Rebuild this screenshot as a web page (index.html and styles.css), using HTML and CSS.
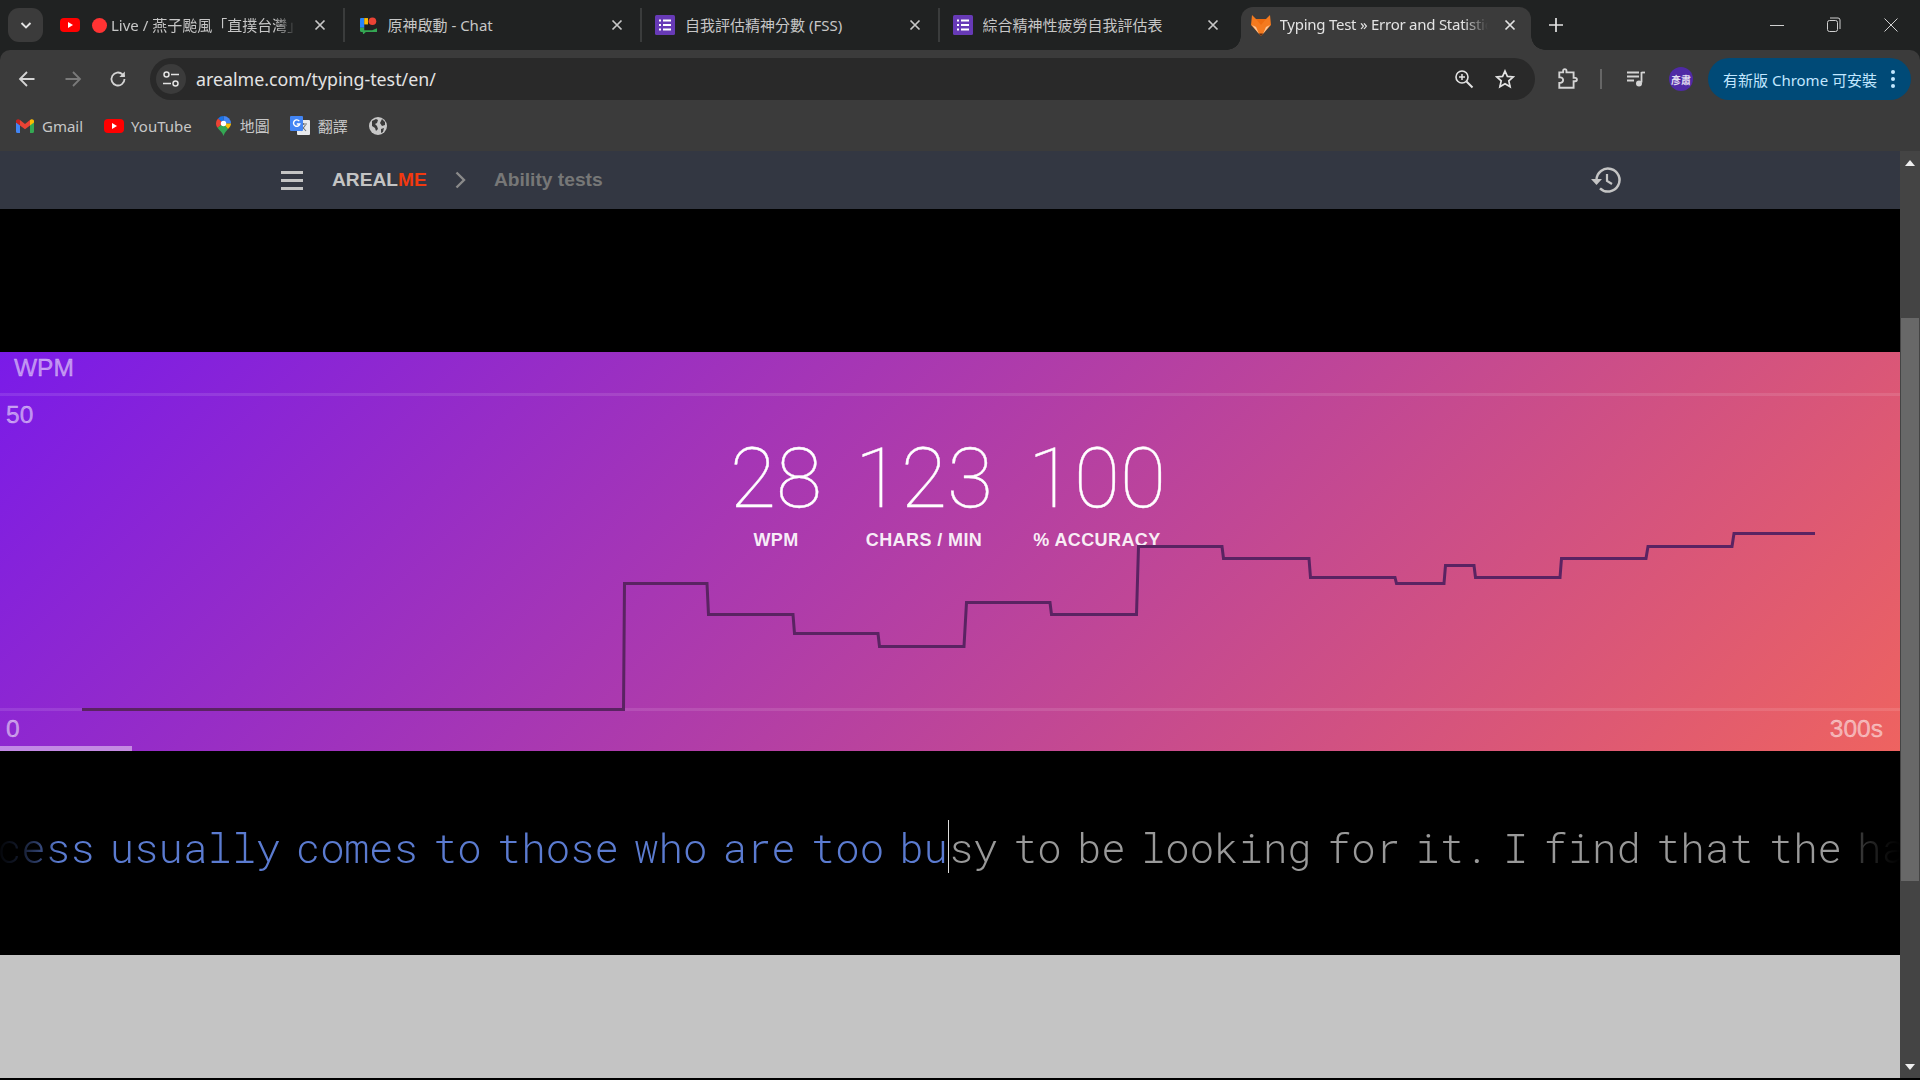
FILE: index.html
```html
<!DOCTYPE html>
<html lang="en">
<head>
<meta charset="utf-8">
<title>Typing Test</title>
<link rel="stylesheet" href="styles.css">
</head>
<body>
<header class="chrome">
  <div class="tabstrip">
    <button class="tab-menu"><svg width="14" height="14" viewBox="0 0 14 14"><path d="M2.5 5l4.5 4.5L11.500 5" fill="none" stroke="#e3e3e3" stroke-width="1.900"/></svg></button>
    <div class="tab">
      <svg class="fav" width="20" height="20" viewBox="0 0 20 20"><rect y="3" width="20" height="14" rx="4" fill="#f00"/><path d="M8 7l5 3-5 3z" fill="#fff"/></svg>
      <span class="live-dot"></span>
      <span class="tab-title tab-title-live">Live / 燕子颱風「直撲台灣」</span>
      <svg class="x" width="12" height="12" viewBox="0 0 12 12"><path d="M1.500 1.500l9 9M10.500 1.500l-9 9" stroke="#c7c7c7" stroke-width="1.700"/></svg>
    </div>
    <div class="tab">
      <svg class="fav fav-chat" width="17" height="17" viewBox="0 0 16 16"><path d="M0 2a1 1 0 0 1 1-1h3v9H0z" fill="#2684fc"/><path d="M4 1h3.500v6H4z" fill="#fbbc04"/><circle cx="11.700" cy="4" r="3.600" fill="#ea4335"/><path d="M0 10h4v2.500h7.500L16 10.500v3.500H5.500L3 16.500 2.500 14H1a1 1 0 0 1-1-1z" fill="#34a853"/></svg>
      <span class="tab-title">原神啟動 - Chat</span>
      <svg class="x" width="12" height="12" viewBox="0 0 12 12"><path d="M1.500 1.500l9 9M10.500 1.500l-9 9" stroke="#c7c7c7" stroke-width="1.700"/></svg>
    </div>
    <div class="tab">
      <svg class="fav" width="20" height="20" viewBox="0 0 20 20"><rect width="20" height="20" rx="1.500" fill="#673ab7"/><path d="M8 5.500h8M8 10h8M8 14.500h8M4 5.500h2M4 10h2M4 14.500h2" stroke="#fff" stroke-width="2"/></svg>
      <span class="tab-title">自我評估精神分數 (FSS)</span>
      <svg class="x" width="12" height="12" viewBox="0 0 12 12"><path d="M1.500 1.500l9 9M10.500 1.500l-9 9" stroke="#c7c7c7" stroke-width="1.700"/></svg>
    </div>
    <div class="tab tab-last">
      <svg class="fav" width="20" height="20" viewBox="0 0 20 20"><rect width="20" height="20" rx="1.500" fill="#673ab7"/><path d="M8 5.500h8M8 10h8M8 14.500h8M4 5.500h2M4 10h2M4 14.500h2" stroke="#fff" stroke-width="2"/></svg>
      <span class="tab-title">綜合精神性疲勞自我評估表</span>
      <svg class="x" width="12" height="12" viewBox="0 0 12 12"><path d="M1.500 1.500l9 9M10.500 1.500l-9 9" stroke="#c7c7c7" stroke-width="1.700"/></svg>
    </div>
    <div class="tab tab-active">
      <svg class="fav" width="20" height="21" viewBox="0 0 20 21"><path d="M1 0l4 4h10l4-4 1 10-10 11L0 10z" fill="#f47a1f"/><path d="M1 10l4 2 3 7z" fill="#fbc79a"/><path d="M19 10l-4 2-3 7z" fill="#fbc79a"/><path d="M8 18.500h4L10 21z" fill="#5b2c14"/><path d="M5 4h10l-5 6z" fill="#ee6c10"/></svg>
      <span class="tab-title tab-title-fade">Typing Test » Error and Statistics</span>
      <svg class="x" width="12" height="12" viewBox="0 0 12 12"><path d="M1.500 1.500l9 9M10.500 1.500l-9 9" stroke="#e3e3e3" stroke-width="1.700"/></svg>
    </div>
    <svg class="plus" width="14" height="14" viewBox="0 0 14 14"><path d="M7 0v14M0 7h14" stroke="#e3e3e3" stroke-width="1.700"/></svg>
    <div class="win-controls">
      <svg width="14" height="14" viewBox="0 0 14 14"><path d="M0 7.500h14" stroke="#d0d0d0" stroke-width="1"/></svg>
      <svg width="14" height="16" viewBox="0 0 14 16"><rect x=".5" y="3.500" width="10" height="11" rx="2" fill="none" stroke="#d0d0d0"/><path d="M3 1h8a2 2 0 0 1 2 2v9" fill="none" stroke="#d0d0d0"/></svg>
      <svg width="14" height="14" viewBox="0 0 14 14"><path d="M.5.500l13 13M13.500.5l-13 13" stroke="#d0d0d0" stroke-width="1"/></svg>
    </div>
  </div>
  <div class="toolbar">
    <svg class="nav-back" width="18" height="18" viewBox="0 0 18 18"><path d="M16.500 9H2M9 2L2 9l7 7" fill="none" stroke="#d4d4d4" stroke-width="1.800"/></svg>
    <svg class="nav-fwd" width="18" height="18" viewBox="0 0 18 18"><path d="M1.500 9H16M9 2l7 7-7 7" fill="none" stroke="#7a7a7a" stroke-width="1.800"/></svg>
    <svg class="nav-reload" width="18" height="18" viewBox="0 0 18 18"><path d="M15.500 9a6.500 6.500 0 1 1-2-4.700L15.500 6.500" fill="none" stroke="#d4d4d4" stroke-width="1.800"/><path d="M15.800 1.500v5.500h-5.500" fill="#d4d4d4"/></svg>
    <div class="omnibox">
      <span class="tune"><svg width="18" height="18" viewBox="0 0 18 18"><circle cx="4.500" cy="4.500" r="2.500" fill="none" stroke="#e3e3e3" stroke-width="1.500"/><circle cx="13.500" cy="13.500" r="2.500" fill="none" stroke="#e3e3e3" stroke-width="1.500"/><path d="M9 4.500h8M1 13.500h8" stroke="#e3e3e3" stroke-width="1.500"/></svg></span>
      <span class="url">arealme.com/typing-test/en/</span>
      <svg class="omni-zoom" width="20" height="20" viewBox="0 0 20 20"><circle cx="8" cy="8" r="6" fill="none" stroke="#e3e3e3" stroke-width="1.600"/><path d="M12.500 12.500l6 6" stroke="#e3e3e3" stroke-width="2"/><path d="M5 8h6M8 5v6" stroke="#e3e3e3" stroke-width="1.500"/></svg>
      <svg class="omni-star" width="20" height="20" viewBox="0 0 20 20"><path d="M10 2l2.400 5.400 5.800.6-4.400 3.900 1.300 5.800L10 14.700l-5.100 3 1.300-5.800L1.800 8l5.800-.6z" fill="none" stroke="#e3e3e3" stroke-width="1.700"/></svg>
    </div>
    <svg class="puzzle" width="22" height="22" viewBox="0 0 20 20"><path d="M3 4h3.500V2.500a1.500 1.500 0 0 1 3 0V4H16v5h1.500a1.500 1.500 0 0 1 0 3H16v6H3v-4.500h1a2 2 0 0 0 0-5H3z" fill="none" stroke="#d4d4d4" stroke-width="1.700"/></svg>
    <span class="tool-sep"></span>
    <svg class="music" width="20" height="18" viewBox="0 0 20 18"><path d="M1 2.500h12M1 6.500h12M1 10.500h7" stroke="#d4d4d4" stroke-width="1.800"/><path d="M15.500 2v10.500" stroke="#d4d4d4" stroke-width="1.800"/><path d="M15.500 2.500H19" stroke="#d4d4d4" stroke-width="1.800"/><circle cx="13" cy="13.500" r="3" fill="#d4d4d4"/></svg>
    <span class="avatar">彥肅</span>
    <div class="update-pill">
      <span>有新版 Chrome 可安裝</span>
      <svg width="6" height="20" viewBox="0 0 6 20"><circle cx="3" cy="3" r="2" fill="#c2e7ff"/><circle cx="3" cy="10" r="2" fill="#c2e7ff"/><circle cx="3" cy="17" r="2" fill="#c2e7ff"/></svg>
    </div>
  </div>
  <div class="bookmarks">
    <span class="bm bm-gmail"><svg width="18" height="14" viewBox="0 0 18 14"><path d="M0 3v9.500A1.500 1.500 0 0 0 1.500 14H4V6z" fill="#4285f4"/><path d="M18 3v9.500a1.500 1.500 0 0 1-1.500 1.500H14V6z" fill="#34a853"/><path d="M14 1v5.500l4-3V2c0-1.500-2-2.300-3-1.500z" fill="#fbbc04"/><path d="M4 1v5.500l5 3.700 5-3.700V1L9 5z" fill="#ea4335"/><path d="M0 2c0-1.500 2-2.300 3-1.500L4 1v5.500L0 3.500z" fill="#c5221f"/></svg>Gmail</span>
    <span class="bm bm-yt"><svg width="20" height="14" viewBox="0 0 20 14"><rect width="20" height="14" rx="4" fill="#f00"/><path d="M8 4l5 3-5 3z" fill="#fff"/></svg>YouTube</span>
    <span class="bm bm-map"><svg width="15" height="20" viewBox="0 0 15 20"><path d="M7.500 0A7.500 7.500 0 0 1 15 7.500L7.500 7.500z" fill="#4285f4"/><path d="M7.500 0A7.500 7.500 0 0 0 2 2.400L7.500 7.500z" fill="#1a73e8"/><path d="M2 2.400A7.500 7.500 0 0 0 0 7.500c0 1.500.6 3 1.500 4.300L7.500 7.500z" fill="#ea4335"/><path d="M1.500 11.800C3.500 14.500 6.500 16.500 7.500 20c1-3.500 3-5 4.500-7L7.500 7.500z" fill="#34a853"/><path d="M15 7.500c0 2-1.500 4-3 5.500L7.500 7.500z" fill="#fbbc04"/><circle cx="7.500" cy="7.500" r="2.700" fill="#fff"/></svg>地圖</span>
    <span class="bm bm-tr"><svg width="20" height="20" viewBox="0 0 20 20"><rect x="7" y="4" width="13" height="15" rx="1" fill="#e8eaed"/><path d="M10 8h7M13.500 7v2M11 15l4.500-6M12 10.500l4 4.500" stroke="#6f7378" stroke-width="1.100" fill="none"/><rect width="13" height="15" rx="1" fill="#4285f4"/><path d="M9.300 5.200A3.200 3.200 0 1 0 9.800 8H6.800" fill="none" stroke="#fff" stroke-width="1.400"/></svg>翻譯</span>
    <svg class="bm-globe" width="18" height="18" viewBox="0 0 18 18"><circle cx="9" cy="9" r="9" fill="#c7c7c7"/><path d="M3 4l4-2 2 1-1 3-2 1 2 2 1 3-2 2-1-3-3-2zM13 2l3 3v3l-3 1-2-3zM12 12l3-1-1 4-2 1z" fill="#3b3b3b"/></svg>
  </div>
</header>
<div class="viewport">
  <main class="page">
    <nav class="sitebar">
      <div class="burger"><i></i><i></i><i></i></div>
      <span class="logo">AREAL<b>ME</b></span>
      <svg class="crumb" width="11" height="18" viewBox="0 0 11 18"><path d="M1.500 1.500L9 9l-7.500 7.500" fill="none" stroke="#8a8a8a" stroke-width="2.400"/></svg>
      <span class="crumb-text">Ability tests</span>
      <svg class="history" width="30" height="26" viewBox="0 0 30 26"><path d="M5.500 13A11.500 11.500 0 1 1 9 21.300" fill="none" stroke="#c4c4c4" stroke-width="2.500"/><path d="M0 12h11l-5.500 6z" fill="#c4c4c4"/><path d="M16 7v7l5 3" fill="none" stroke="#c4c4c4" stroke-width="2.200"/></svg>
    </nav>
    <div class="gap-black"></div>
    <section class="panel">
      <div class="axis-title">WPM</div>
      <div class="axis-max">50</div>
      <div class="stats">
        <div class="stat stat-wpm"><strong>28</strong><span>WPM</span></div>
        <div class="stat stat-chars"><strong>123</strong><span>CHARS / MIN</span></div>
        <div class="stat stat-acc"><strong>100</strong><span>% ACCURACY</span></div>
      </div>
      <div class="axis-base"><span>0</span><span>300s</span></div>
      <div class="progress"></div>
      <svg class="chart" width="1900" height="399" viewBox="0 352 1900 399"><path d="M82 709.500H623.500L624.500 583.500H707L708.500 614.500H793L794.500 633.500H878L879.500 646.500H964L966.500 602.500H1050L1051.500 614.500H1136.500L1138.500 546.500H1222L1223.500 558.500H1309L1310.500 577.500H1395L1396.500 583.500H1444L1445.500 565.500H1474L1475.500 577.500H1560L1561.500 558.500H1646L1648 546.500H1732L1734 533.500H1815" fill="none" stroke="#5a2362" stroke-width="3"/></svg>
    </section>
    <section class="typing">
      <div class="typing-line">
        <div class="typed"><span>Success usually comes to those who are too bu</span></div>
        <div class="caret"></div>
        <div class="untyped"><span>sy to be looking for it. I find that the happiest people are</span></div>
      </div>
    </section>
    <div class="gray"></div>
  </main>
  <aside class="scrollbar">
    <span class="arrow-up"></span>
    <div class="thumb"></div>
    <span class="arrow-down"></span>
  </aside>
</div>
<div class="foot"></div>
</body>
</html>
```

FILE: styles.css
```css
* { box-sizing: border-box; }
html, body { margin: 0; height: 100%; }
body {
  width: 1920px;
  height: 1080px;
  overflow: hidden;
  background: #000;
  font-family: "Noto Sans", "Noto Sans CJK TC", sans-serif;
  display: flex;
  flex-direction: column;
}

/* browser chrome */
.chrome { background: #202222; flex: none; }
.tabstrip {
  height: 50px;
  background: #202222;
  display: flex;
  align-items: center;
  padding-left: 8px;
  color: #c7c7c7;
  font-size: 15px;
}
.tab-menu {
  width: 35px;
  height: 34px;
  margin-right: 4px;
  border: 0;
  border-radius: 11px;
  background: #3b3b3b;
  display: flex;
  align-items: center;
  justify-content: center;
  padding: 0;
  flex: none;
}
.tab {
  width: 297.500px;
  height: 34px;
  flex: none;
  display: flex;
  align-items: center;
  padding-left: 13px;
  padding-right: 17px;
  border-right: 2px solid #3a3c3c;
  white-space: nowrap;
}
.tab-last { border-right: 0; width: 301px; padding-right: 22px; }
.fav { flex: none; margin-right: 10px; }
.fav-chat { margin-right: 11px; margin-left: 2px; }
.live-dot { width: 15px; height: 15px; border-radius: 50%; background: #f33; flex: none; margin-left: 2px; margin-right: 4px; }
.tab-title { flex: 1; min-width: 0; overflow: hidden; white-space: nowrap; margin-bottom: 2px; }
.tab-title-live {
  margin-right: 18px;
  -webkit-mask-image: linear-gradient(to right, #000 90%, transparent);
  mask-image: linear-gradient(to right, #000 90%, transparent);
}
.x { flex: none; }
.tab-active {
  position: relative;
  width: 290px;
  height: 43px;
  margin-top: 7px;
  padding-left: 10px;
  padding-right: 15px;
  padding-bottom: 7px;
  background: #3b3b3b;
  border: 0;
  border-radius: 12px 12px 0 0;
  color: #e3e3e3;
}
.tab-active .fav { margin-right: 9px; }
.tab-active::before,
.tab-active::after {
  content: "";
  position: absolute;
  bottom: 0;
  width: 14px;
  height: 14px;
}
.tab-active::before { right: 100%; background: radial-gradient(circle at 0 0, transparent 13.500px, #3b3b3b 14px); }
.tab-active::after { left: 100%; background: radial-gradient(circle at 100% 0, transparent 13.500px, #3b3b3b 14px); }
.tab-title-fade {
  margin-right: 16px;
  letter-spacing: -.25px;
  -webkit-mask-image: linear-gradient(to right, #000 88%, transparent);
  mask-image: linear-gradient(to right, #000 88%, transparent);
}
.plus { margin-left: 18px; flex: none; }
.win-controls {
  margin-left: auto;
  display: flex;
  align-items: center;
  gap: 43px;
  padding-right: 22px;
}

.toolbar {
  height: 50px;
  display: flex;
  align-items: center;
  padding: 8px 8px 0 18px;
  background: #3b3b3b;
  border-radius: 10px 10px 0 0;
}
.toolbar > svg { flex: none; }
.nav-fwd { margin-left: 28px; }
.nav-reload { margin-left: 27px; }
.omnibox {
  margin-left: 23px;
  width: 1385px;
  height: 42px;
  border-radius: 21px;
  background: #292929;
  display: flex;
  align-items: center;
  padding-left: 6px;
  flex: none;
}
.tune {
  width: 30px;
  height: 30px;
  border-radius: 50%;
  background: #3b3b3b;
  display: flex;
  align-items: center;
  justify-content: center;
  flex: none;
}
.url { margin-left: 10px; color: #e3e3e3; font-size: 17.800px; flex: 1; }
.omni-star { margin-left: 21px; margin-right: 20px; }
.puzzle { margin-left: 21px; }
.tool-sep { width: 2px; height: 20px; background: #666; margin-left: 22px; flex: none; }
.music { margin-left: 24px; }
.avatar {
  width: 24px;
  height: 24px;
  margin-left: 23px;
  border-radius: 50%;
  background: #4f2aa5;
  color: #e0dcf0;
  font-size: 10px;
  font-weight: 700;
  display: flex;
  align-items: center;
  justify-content: center;
  white-space: nowrap;
  flex: none;
  overflow: hidden;
}
.update-pill {
  margin-left: 15px;
  width: 203px;
  height: 42px;
  border-radius: 21px;
  background: #004a77;
  color: #c2e7ff;
  font-size: 15px;
  display: flex;
  align-items: center;
  justify-content: space-between;
  padding: 0 15px 0 15px;
  flex: none;
}

.bookmarks {
  height: 51px;
  display: flex;
  align-items: center;
  padding-left: 16px;
  color: #c7c7c7;
  font-size: 15px;
  background: #3b3b3b;
}
.bm { display: flex; align-items: center; gap: 8px; flex: none; }
.bm-gmail { margin-right: 21px; }
.bm-yt { gap: 7px; margin-right: 24px; }
.bm-map { gap: 9px; margin-right: 20px; }
.bm-tr { margin-right: 21px; }

/* page */
.viewport { flex: 1; display: flex; min-height: 0; }
.page { flex: 1; min-width: 0; display: flex; flex-direction: column; font-family: "Liberation Sans", Arial, sans-serif; }
.sitebar {
  height: 58px;
  background: #333742;
  display: flex;
  align-items: center;
  padding-left: 281px;
  flex: none;
}
.burger { width: 22px; display: flex; flex-direction: column; gap: 5px; flex: none; }
.burger i { display: block; height: 3px; background: #c4c4c4; }
.logo { margin-left: 29px; font-size: 19.200px; font-weight: 700; color: #c4c4c4; }
.logo b { color: #f2390f; }
.crumb { margin-left: 28px; flex: none; }
.crumb-text { margin-left: 28px; font-size: 19.200px; font-weight: 700; color: #777; }
.history { margin-left: auto; margin-right: 279px; flex: none; }
.gap-black { height: 143px; background: #000; flex: none; }

.panel {
  position: relative;
  height: 399px;
  flex: none;
  background: linear-gradient(135deg, #7a1be8 0%, #ee6360 100%);
  color: rgba(255, 255, 255, .5);
  font-size: 24.500px;
  -webkit-text-stroke: .35px rgba(255, 255, 255, .5);
  display: flex;
  flex-direction: column;
}
.axis-title { height: 44px; padding: 2px 0 0 14px; line-height: 28px; border-bottom: 3px solid rgba(255, 255, 255, .11); flex: none; }
.axis-max { padding: 5px 0 0 6px; line-height: 28px; height: 32px; flex: none; }
.stats { display: flex; justify-content: center; gap: 34px; height: 279px; color: #fff; padding: 1px 4px 0 0; flex: none; -webkit-text-stroke: 0; }
.stat { display: flex; flex-direction: column; align-items: center; }
.stat-wpm { margin-right: -1px; }
.stat-chars { margin-right: 1px; }
.stat strong { font-family: Roboto, sans-serif; font-weight: 100; font-size: 84px; line-height: 100px; -webkit-text-stroke: .4px #fff; }
.stat span { font-size: 18px; letter-spacing: .4px; font-weight: 700; color: rgba(255, 255, 255, .92); margin-top: 1px; line-height: 20px; }
.axis-base {
  border-top: 3px solid rgba(255, 255, 255, .11);
  padding: 4px 17px 0 6px;
  display: flex;
  justify-content: space-between;
  line-height: 28px;
  position: absolute;
  left: 0;
  right: 0;
  top: 356px;
}
.progress { position: absolute; left: 0; bottom: 0; width: 132px; height: 5px; background: rgba(255, 255, 255, .45); }
.chart { position: absolute; left: 0; top: 0; }

.typing {
  height: 204px;
  flex: none;
  background: #000;
  display: flex;
  align-items: center;
  padding-bottom: 13px;
  font-family: "Roboto Mono", "DejaVu Sans Mono", "Liberation Mono", monospace;
  font-size: 40.700px;
  word-spacing: -9.300px;
  font-weight: 300;
  white-space: nowrap;
  -webkit-mask-image: linear-gradient(to right, rgba(0,0,0,.05) 0, rgba(0,0,0,.2) 20px, rgba(0,0,0,.5) 38px, #000 58px, #000 1842px, rgba(0,0,0,.4) 1856px, rgba(0,0,0,.1) 1885px, transparent 1900px);
  mask-image: linear-gradient(to right, rgba(0,0,0,.05) 0, rgba(0,0,0,.2) 20px, rgba(0,0,0,.5) 38px, #000 58px, #000 1842px, rgba(0,0,0,.4) 1856px, rgba(0,0,0,.1) 1885px, transparent 1900px);
}
.typing-line { display: flex; width: 100%; align-items: center; overflow: hidden; }
.typed { width: 948px; display: flex; justify-content: flex-end; color: #5b7bd0; overflow: hidden; flex: none; }
.typed span, .untyped span { flex: none; }
.caret { width: 1px; height: 53px; background: #ddd; flex: none; }
.untyped { flex: 1; min-width: 0; overflow: hidden; color: #999; }
.gray { flex: 1; background: #c4c4c4; }

.scrollbar {
  width: 20px;
  flex: none;
  background: #444;
  display: flex;
  flex-direction: column;
  align-items: center;
  padding-top: 9px;
  padding-bottom: 8px;
}
.arrow-up { width: 0; height: 0; border: 5px solid transparent; border-top: 0; border-bottom: 6px solid #eee; flex: none; }
.arrow-down { width: 0; height: 0; border: 5px solid transparent; border-bottom: 0; border-top: 6px solid #eee; flex: none; margin-top: auto; }
.thumb { width: 18px; height: 563px; background: #686868; margin-top: 152px; flex: none; }
.foot { height: 2px; background: #000; flex: none; }
```
